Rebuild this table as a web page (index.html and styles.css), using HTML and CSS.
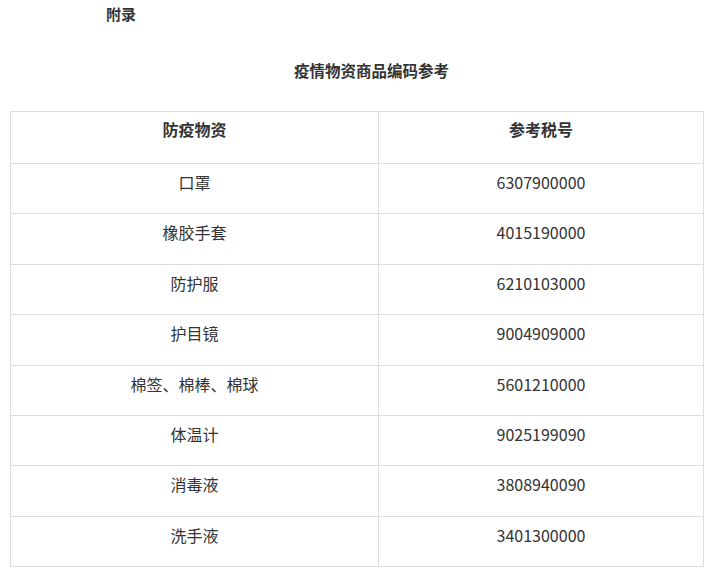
FILE: index.html
```html
<!DOCTYPE html>
<html lang="zh">
<head>
<meta charset="utf-8">
<link rel="stylesheet" href="styles.css">
</head>
<body>
<p class="appendix">附录</p>
<p class="title">疫情物资商品编码参考</p>
<table class="codes">
  <thead>
    <tr class="head-row"><th class="col-name">防疫物资</th><th>参考税号</th></tr>
  </thead>
  <tbody>
    <tr><td>口罩</td><td>6307900000</td></tr>
    <tr><td>橡胶手套</td><td>4015190000</td></tr>
    <tr><td>防护服</td><td>6210103000</td></tr>
    <tr><td>护目镜</td><td>9004909000</td></tr>
    <tr><td>棉签、棉棒、棉球</td><td>5601210000</td></tr>
    <tr><td>体温计</td><td>9025199090</td></tr>
    <tr><td>消毒液</td><td>3808940090</td></tr>
    <tr><td>洗手液</td><td>3401300000</td></tr>
  </tbody>
</table>
</body>
</html>
```
FILE: styles.css
```css
html, body {
  margin: 0;
  padding: 0;
  background: #fff;
}
body {
  padding: 0 16px 0 10px;
  font-family: "Noto Sans CJK SC", "Noto Sans", sans-serif;
  font-size: 16px;
  color: #333;
}
.appendix {
  margin: 0;
  padding-left: 96px;
  line-height: 28px;
  font-weight: bold;
  font-size: 15px;
}
.title {
  margin: 0;
  padding: 28px 0 0 284px;
  line-height: 28px;
  font-weight: bold;
  font-size: 15.5px;
  height: 55px;
  box-sizing: content-box;
}
.codes {
  width: 694px;
  border-collapse: collapse;
  table-layout: fixed;
}
.codes tr {
  height: 50.4px;
}
.codes .head-row {
  height: 52px;
}
.codes th, .codes td {
  border: 1px solid #dddddd;
  text-align: center;
  vertical-align: top;
  padding: 6px 0 0 0;
  line-height: 24px;
  font-size: 16px;
  color: #333;
}
.codes th {
  font-weight: bold;
  padding-top: 5px;
}
.codes .col-name {
  width: 367px;
}
```
